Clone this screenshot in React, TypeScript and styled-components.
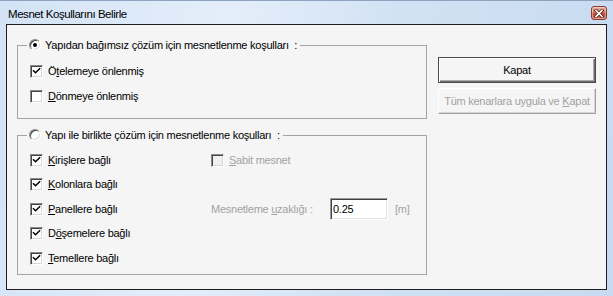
import React from 'react'
import styled, { createGlobalStyle } from 'styled-components'

const GlobalStyle = createGlobalStyle`
    html, body {
        margin: 0;
        padding: 0;
        background: #ffffff;
    }
    * {
        box-sizing: border-box;
    }
`

const Mnemonic = ({ children }: { children: React.ReactNode }) => <u>{children}</u>

interface PropsCheck {
    checked?: boolean
    disabled?: boolean
    children: React.ReactNode
}

const Check = ({ checked, disabled, children }: PropsCheck) => {
    return (
        <CheckRow $disabled={disabled}>
            <CheckBox $disabled={disabled}>
                {checked && (
                    <svg width="9" height="9" viewBox="0 0 9 9">
                        <path d="M1.5 3.8 L3.5 5.8 L7.6 1.7" fill="none" stroke="#000" strokeWidth="1.5" strokeLinecap="square" />
                    </svg>
                )}
            </CheckBox>
            <span>{children}</span>
        </CheckRow>
    )
}

const Radio = ({ checked }: { checked?: boolean }) => (
    <RadioDot>{checked && <RadioInner />}</RadioDot>
)

const App = () => {
    return (
        <>
            <GlobalStyle />
            <Frame>
                <TitleBar>
                    <TitleText>Mesnet Koşullarını Belirle</TitleText>
                    <CloseButton>
                        <svg width="10" height="9" viewBox="0 0 10 9">
                            <path d="M2 1.5 L8 7.5 M8 1.5 L2 7.5" stroke="#5a1f18" strokeWidth="3.2" strokeLinecap="square" />
                            <path d="M2 1.5 L8 7.5 M8 1.5 L2 7.5" stroke="#ffffff" strokeWidth="1.6" strokeLinecap="square" />
                        </svg>
                    </CloseButton>
                </TitleBar>

                <Client>
                    <LeftColumn>
                        <GroupBox>
                            <Legend>
                                <Radio checked />
                                <span>Yapıdan bağımsız çözüm için mesnetlenme koşulları&nbsp; :</span>
                            </Legend>
                            <Rows $columns="1fr" $rowHeight={25} $padTop={7} $padBottom={9}>
                                <LeftCell><Check checked>Ö<Mnemonic>t</Mnemonic>elemeye önlenmiş</Check></LeftCell>
                                <LeftCell><Check><Mnemonic>D</Mnemonic>önmeye önlenmiş</Check></LeftCell>
                            </Rows>
                        </GroupBox>

                        <GroupBox>
                            <Legend>
                                <Radio />
                                <span>Yapı ile birlikte çözüm için mesnetlenme koşulları&nbsp; :</span>
                            </Legend>
                            <Rows $columns="181px 1fr" $rowHeight={24.5} $padTop={6} $padBottom={3}>
                                <LeftCell><Check checked><Mnemonic>K</Mnemonic>irişlere bağlı</Check></LeftCell>
                                <LeftCell><Check checked><Mnemonic>K</Mnemonic>olonlara bağlı</Check></LeftCell>
                                <LeftCell><Check checked><Mnemonic>P</Mnemonic>anellere bağlı</Check></LeftCell>
                                <LeftCell><Check checked>D<Mnemonic>ö</Mnemonic>şemelere bağlı</Check></LeftCell>
                                <LeftCell><Check checked><Mnemonic>T</Mnemonic>emellere bağlı</Check></LeftCell>

                                <RightCell $row={1}>
                                    <Check disabled><Mnemonic>S</Mnemonic>abit mesnet</Check>
                                </RightCell>
                                <RightCell $row={3}>
                                    <FieldLabel>Mesnetleme <Mnemonic>u</Mnemonic>zaklığı :</FieldLabel>
                                    <NumberInput value="0.25" readOnly />
                                    <UnitLabel>[m]</UnitLabel>
                                </RightCell>
                            </Rows>
                        </GroupBox>
                    </LeftColumn>

                    <ButtonColumn>
                        <DialogButton $default>Kapat</DialogButton>
                        <DialogButton disabled>Tüm kenarlara uygula ve <Mnemonic>K</Mnemonic>apat</DialogButton>
                    </ButtonColumn>
                </Client>
            </Frame>
        </>
    )
}

export default App

const Frame = styled.div`
    display: flex;
    flex-direction: column;
    width: 613px;
    height: 296px;
    padding: 0 6px 6px 6px;
    background: linear-gradient(100deg, #d3e3f5 0%, #e4eefa 35%, #d2e2f4 60%, #c7daf0 100%);
    border-top: 1px solid #8ea4be;
    font-family: "Liberation Sans", Arial, sans-serif;
`

const TitleBar = styled.div`
    display: flex;
    justify-content: space-between;
    align-items: flex-start;
    height: 23px;
    flex-shrink: 0;
`

const TitleText = styled.div`
    padding: 7px 0 0 2px;
    font-size: 11.5px;
    line-height: 13px;
    letter-spacing: -0.45px;
    color: #000;
`

const CloseButton = styled.div`
    display: flex;
    justify-content: center;
    align-items: center;
    width: 16px;
    height: 14px;
    margin-top: 5px;
    border: 1px solid #8a3a2e;
    border-radius: 3px;
    background: linear-gradient(180deg, #eab3a5 0%, #d77a66 45%, #c24a35 55%, #d2735c 100%);
    box-shadow: inset 0 0 0 1px rgba(255, 255, 255, 0.35);
`

const Client = styled.div`
    display: flex;
    flex: 1;
    gap: 11px;
    padding: 13px 9px 0 10px;
    border: 1px solid #1e1e1e;
    background: #f5f5f5;
    font-size: 11px;
    letter-spacing: -0.25px;
    color: #000;
`

const LeftColumn = styled.div`
    display: flex;
    flex-direction: column;
    gap: 9px;
    width: 410px;
`

const GroupBox = styled.fieldset`
    margin: 0;
    padding: 0;
    min-width: 0;
    border: 1px solid #a3a3a3;
`

const Legend = styled.legend`
    display: flex;
    align-items: center;
    gap: 4px;
    height: 14px;
    margin-left: 9px;
    padding: 0 3px 0 2px;
    line-height: 14px;
`

const Rows = styled.div<{ $columns: string; $rowHeight: number; $padTop: number; $padBottom: number }>`
    display: grid;
    grid-template-columns: ${p => p.$columns};
    grid-auto-rows: ${p => p.$rowHeight}px;
    padding: ${p => p.$padTop}px 0 ${p => p.$padBottom}px 12px;
`

const LeftCell = styled.div`
    grid-column: 1;
    display: flex;
    align-items: center;
`

const RightCell = styled.div<{ $row: number }>`
    grid-column: 2;
    grid-row: ${p => p.$row};
    display: flex;
    align-items: center;
`

const CheckRow = styled.label<{ $disabled?: boolean }>`
    display: flex;
    align-items: center;
    gap: 5px;
    color: ${p => (p.$disabled ? '#a2a2a2' : '#000')};
    line-height: 13px;
`

const CheckBox = styled.span<{ $disabled?: boolean }>`
    display: flex;
    justify-content: center;
    align-items: center;
    width: 13px;
    height: 13px;
    flex-shrink: 0;
    border: 1px solid;
    border-color: #8a8a8a #ffffff #ffffff #8a8a8a;
    box-shadow: inset 1px 1px 0 #444444, inset -1px -1px 0 #d8d8d8;
    background: ${p => (p.$disabled ? '#efefef' : '#ffffff')};
`

const RadioDot = styled.span`
    display: flex;
    justify-content: center;
    align-items: center;
    width: 12px;
    height: 12px;
    flex-shrink: 0;
    border-radius: 50%;
    border: 1px solid;
    border-color: #8a8a8a #ffffff #ffffff #8a8a8a;
    box-shadow: inset 1px 1px 0 #444444, inset -1px -1px 0 #d8d8d8;
    background: #ffffff;
`

const RadioInner = styled.span`
    width: 4px;
    height: 4px;
    border-radius: 50%;
    background: #000;
`

const FieldLabel = styled.span`
    width: 119px;
    color: #a2a2a2;
`

const NumberInput = styled.input`
    width: 58px;
    height: 22px;
    padding: 0 2px;
    border: 1px solid;
    border-color: #9a9a9a #ffffff #ffffff #9a9a9a;
    box-shadow: inset 1px 1px 0 #404040, inset -1px -1px 0 #e3e3e3;
    background: #ffffff;
    font-family: "Liberation Sans", Arial, sans-serif;
    font-size: 11px;
    letter-spacing: -0.25px;
    color: #000;
    outline: none;
`

const UnitLabel = styled.span`
    margin-left: 7px;
    color: #a2a2a2;
`

const ButtonColumn = styled.div`
    display: flex;
    flex-direction: column;
    gap: 5px;
    width: 158px;
    padding-top: 19px;
`

const DialogButton = styled.button<{ $default?: boolean }>`
    height: 26px;
    padding: 0;
    font-family: "Liberation Sans", Arial, sans-serif;
    font-size: 11px;
    letter-spacing: -0.25px;
    background: #f5f5f5;
    color: #000;
    border: 1px solid;
    border-color: ${p => (p.$default ? '#4a4a4a' : '#ffffff #a0a0a0 #a0a0a0 #ffffff')};
    box-shadow: ${p =>
        p.$default
            ? 'inset 1px 1px 0 #ffffff, inset -1px -1px 0 #6e6e6e, inset -2px -2px 0 #a8a8a8'
            : 'inset -1px -1px 0 #d6d6d6'};

    &:disabled {
        color: #a2a2a2;
    }
`
